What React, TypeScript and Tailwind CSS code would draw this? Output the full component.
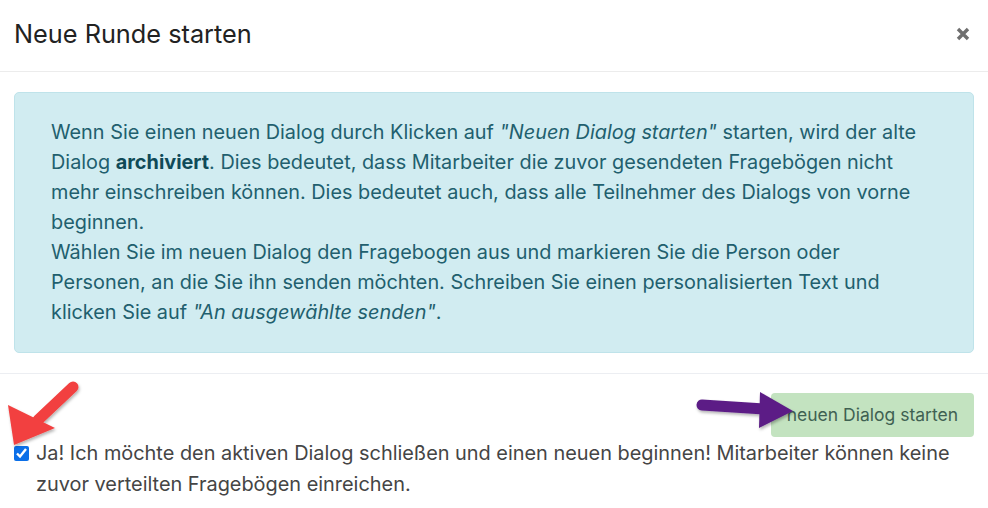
import { useState } from 'react';

export default function App() {
  const [confirmed, setConfirmed] = useState(true);

  return (
    <div className="relative w-[988px] h-[508px] overflow-hidden bg-white font-['Inter','Noto_Sans',sans-serif]">
      {/* Header */}
      <div className="flex items-center justify-between h-[72px] px-[14px] pb-[3px] border-b border-[#ececec]">
        <h2 className="text-[25.3px] text-[#222] font-normal">Neue Runde starten</h2>
        <button className="mr-[4px] text-[#777]">
          <svg width="14" height="14" viewBox="0 0 14 14">
            <path d="M2 2 L12 12 M12 2 L2 12" stroke="#6f6f6f" strokeWidth="3.4" strokeLinecap="butt" />
          </svg>
        </button>
      </div>

      {/* Body */}
      <div className="px-[14px] pt-[20px] pb-[20px] border-b border-[#eceef2]">
        <div className="bg-[#d1ecf1] border border-[#bfe3ea] rounded-[5px] pl-[36px] pr-[20px] pt-[24px] pb-[25px] text-[#215f6e] text-[19.85px] leading-[30px] whitespace-nowrap">
          Wenn Sie einen neuen Dialog durch Klicken auf <em>"Neuen Dialog starten"</em> starten, wird der alte
          <br />
          Dialog <strong className="font-bold text-[#0f4a58]">archiviert</strong>. Dies bedeutet, dass Mitarbeiter die zuvor gesendeten Fragebögen nicht
          <br />
          mehr einschreiben können. Dies bedeutet auch, dass alle Teilnehmer des Dialogs von vorne
          <br />
          beginnen.
          <br />
          Wählen Sie im neuen Dialog den Fragebogen aus und markieren Sie die Person oder
          <br />
          Personen, an die Sie ihn senden möchten. Schreiben Sie einen personalisierten Text und
          <br />
          klicken Sie auf <em>"An ausgewählte senden"</em>.
        </div>
      </div>

      {/* Footer */}
      <div className="px-[14px] pt-[19px]">
        <div className="flex justify-end">
          <button className="h-[44px] px-[16px] bg-[#c3e3c0] rounded-[4px] text-[#3f6152] text-[17.5px]">
            neuen Dialog starten
          </button>
        </div>
        <label className="flex items-start gap-[7px] mt-[1px] text-[#454545] text-[19.9px] leading-[31px] whitespace-nowrap">
          <input
            type="checkbox"
            checked={confirmed}
            onChange={e => setConfirmed(e.target.checked)}
            className="mt-[8px] w-[15px] h-[15px] shrink-0 accent-[#0b6fe8]"
          />
          <span>
            Ja! Ich möchte den aktiven Dialog schließen und einen neuen beginnen! Mitarbeiter können keine
            <br />
            zuvor verteilten Fragebögen einreichen.
          </span>
        </label>
      </div>

      {/* Annotation arrows */}
      <svg className="absolute left-0 top-0 pointer-events-none" width="988" height="508">
        <defs>
          <filter id="sh" x="-20%" y="-20%" width="140%" height="140%">
            <feDropShadow dx="1" dy="2" stdDeviation="1.5" floodColor="#000" floodOpacity="0.3" />
          </filter>
        </defs>
        <g filter="url(#sh)">
          <line x1="73" y1="387" x2="38" y2="420" stroke="#f2403f" strokeWidth="11" strokeLinecap="round" />
          <polygon points="14,445 8,405 55,428" fill="#f2403f" />
        </g>
        <g filter="url(#sh)">
          <line x1="702" y1="405" x2="764" y2="409" stroke="#5c1f86" strokeWidth="11" strokeLinecap="round" />
          <polygon points="760,392 793,411 759,428" fill="#5c1f86" />
        </g>
      </svg>
    </div>
  );
}
